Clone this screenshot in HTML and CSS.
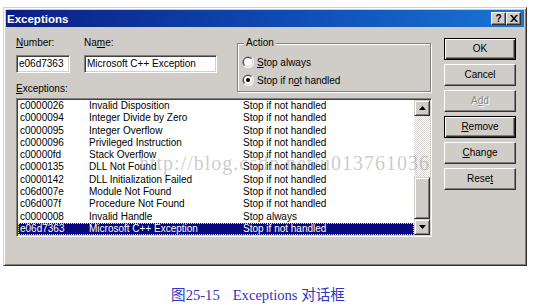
FILE: index.html
```html
<!DOCTYPE html>
<html>
<head>
<meta charset="utf-8">
<link rel="stylesheet" href="styles.css">
</head>
<body>
<div class="page">
  <div class="dialog">
    <div class="titlebar">
      <span class="title">Exceptions</span>
      <div class="tbtns">
        <div class="tbtn help">?</div>
        <div class="tbtn">
          <svg width="8" height="7" viewBox="0 0 8 7"><path d="M0 0h2l2 2.5L6 0h2L5 3.5 8 7H6L4 4.5 2 7H0l3-3.5z" fill="#000"/></svg>
        </div>
      </div>
    </div>
    <div class="body">
      <div class="left">
        <div class="top">
          <div class="fields">
            <div class="fieldrow">
              <div class="field num">
                <span class="lbl"><u>N</u>umber:</span>
                <div class="edit">e06d7363</div>
              </div>
              <div class="field name">
                <span class="lbl">Na<u>m</u>e:</span>
                <div class="edit">Microsoft C++ Exception</div>
              </div>
            </div>
            <span class="lbl exlabel"><u>E</u>xceptions:</span>
          </div>
          <fieldset class="group">
            <legend>Action</legend>
            <div class="radio">
              <svg width="12" height="12" viewBox="0 0 12 12"><circle cx="6" cy="6" r="6" fill="#fff"/><path d="M1.76 10.24A6 6 0 0 1 10.24 1.76z" fill="#808080"/><circle cx="6" cy="6" r="5" fill="#d4d0c8"/><path d="M2.46 9.54A5 5 0 0 1 9.54 2.46z" fill="#404040"/><circle cx="6" cy="6" r="4" fill="#fff"/></svg>
              <span><u>S</u>top always</span>
            </div>
            <div class="radio">
              <svg width="12" height="12" viewBox="0 0 12 12"><circle cx="6" cy="6" r="6" fill="#fff"/><path d="M1.76 10.24A6 6 0 0 1 10.24 1.76z" fill="#808080"/><circle cx="6" cy="6" r="5" fill="#d4d0c8"/><path d="M2.46 9.54A5 5 0 0 1 9.54 2.46z" fill="#404040"/><circle cx="6" cy="6" r="4" fill="#fff"/><circle cx="6" cy="6" r="2" fill="#000"/></svg>
              <span>Stop if n<u>o</u>t handled</span>
            </div>
          </fieldset>
        </div>
        <div class="list">
          <div class="rows">
            <div class="row"><span class="c1">c0000026</span><span class="c2">Invalid Disposition</span><span>Stop if not handled</span></div>
            <div class="row"><span class="c1">c0000094</span><span class="c2">Integer Divide by Zero</span><span>Stop if not handled</span></div>
            <div class="row"><span class="c1">c0000095</span><span class="c2">Integer Overflow</span><span>Stop if not handled</span></div>
            <div class="row"><span class="c1">c0000096</span><span class="c2">Privileged Instruction</span><span>Stop if not handled</span></div>
            <div class="row"><span class="c1">c00000fd</span><span class="c2">Stack Overflow</span><span>Stop if not handled</span></div>
            <div class="row"><span class="c1">c0000135</span><span class="c2">DLL Not Found</span><span>Stop if not handled</span></div>
            <div class="row"><span class="c1">c0000142</span><span class="c2">DLL Initialization Failed</span><span>Stop if not handled</span></div>
            <div class="row"><span class="c1">c06d007e</span><span class="c2">Module Not Found</span><span>Stop if not handled</span></div>
            <div class="row"><span class="c1">c06d007f</span><span class="c2">Procedure Not Found</span><span>Stop if not handled</span></div>
            <div class="row"><span class="c1">c0000008</span><span class="c2">Invalid Handle</span><span>Stop always</span></div>
            <div class="row sel"><span class="c1">e06d7363</span><span class="c2">Microsoft C++ Exception</span><span>Stop if not handled</span></div>
          </div>
          <div class="scrollbar">
            <div class="sbtn"><svg width="7" height="4" viewBox="0 0 7 4"><path d="M3.5 0L7 4H0z" fill="#000"/></svg></div>
            <div class="track"></div>
            <div class="thumb"></div>
            <div class="sbtn"><svg width="7" height="4" viewBox="0 0 7 4"><path d="M0 0h7L3.5 4z" fill="#000"/></svg></div>
          </div>
          <span class="watermark">http://blog.csdn.net/u013761036</span>
        </div>
      </div>
      <div class="buttons">
        <div class="btn dflt">OK</div>
        <div class="btn">Cancel</div>
        <div class="btn disabled">A<u>d</u>d</div>
        <div class="btn dflt"><u>R</u>emove</div>
        <div class="btn"><u>C</u>hange</div>
        <div class="btn">Rese<u>t</u></div>
      </div>
    </div>
  </div>
</div>
<div class="caption"><span>图25-15</span><span class="cap2">Exceptions 对话框</span></div>
</body>
</html>
```
FILE: styles.css
```css
html, body {
  margin: 0;
  padding: 0;
  background: #fff;
}
body {
  font-family: "Liberation Sans", Arial, sans-serif;
  font-size: 10px;
  color: #000;
}
.page {
  padding: 7px 0 0 3px;
}
.dialog {
  width: 524px;
  height: 259px;
  box-sizing: border-box;
  background: #d0cdc8;
  border: 1px solid;
  border-color: #d4d0c8 #303030 #303030 #d4d0c8;
  box-shadow: inset 1px 1px #fff, inset -1px -1px #808080;
  padding: 2px;
  display: flex;
  flex-direction: column;
}
.titlebar {
  height: 17px;
  flex: none;
  display: flex;
  align-items: center;
  justify-content: space-between;
  padding: 0 3px 0 1px;
  background: linear-gradient(90deg, #0a1e84 0%, #0f4cb4 55%, #1a74d6 100%);
  color: #fff;
}
.title {
  font-weight: bold;
  font-size: 11.5px;
  line-height: 14px;
}
.tbtns {
  display: flex;
}
.tbtn {
  width: 15px;
  height: 13px;
  box-sizing: border-box;
  background: #d0cdc8;
  border: 1px solid;
  border-color: #fff #303030 #303030 #fff;
  box-shadow: inset -1px -1px #808080;
  display: flex;
  align-items: center;
  justify-content: center;
  color: #000;
}
.help {
  font-weight: bold;
  font-size: 10px;
  line-height: 10px;
}
.body {
  display: flex;
  padding: 10px 0 0 10px;
}
.left {
  width: 416px;
}
.top {
  display: flex;
  height: 58px;
}
.fields {
  display: flex;
  flex-direction: column;
}
.fieldrow {
  display: flex;
  gap: 14px;
}
.field {
  display: flex;
  flex-direction: column;
  gap: 6px;
}
.lbl {
  line-height: 12px;
  display: block;
}
.edit {
  height: 18px;
  box-sizing: border-box;
  background: #fff;
  border: 1px solid;
  border-color: #808080 #fff #fff #808080;
  box-shadow: inset 1px 1px #404040, inset -1px -1px #d4d0c8;
  padding-left: 2px;
  line-height: 16px;
  white-space: nowrap;
  overflow: hidden;
}
.num .edit { width: 54px; }
.name .edit { width: 133px; }
.exlabel {
  margin-top: 10px;
}
.group {
  margin: 0 0 0 20px;
  padding: 4px 0 0 4px;
  width: 194px;
  height: 55px;
  box-sizing: border-box;
  border: 1px solid #808080;
  box-shadow: inset 1px 1px #fff, 1px 1px #fff;
  min-inline-size: 0;
}
.group legend {
  padding: 0 2px;
  margin-left: 2px;
  line-height: 12px;
  background: #d0cdc8;
}
.radio {
  display: flex;
  align-items: center;
  gap: 3px;
  height: 18px;
}
.radio svg {
  flex: none;
}
.list {
  position: relative;
  margin-top: 3px;
  height: 139px;
  box-sizing: border-box;
  border: 1px solid;
  border-color: #808080 #fff #fff #808080;
  box-shadow: inset 1px 1px #404040, inset -1px -1px #d4d0c8;
  padding: 1px;
  background: #fff;
  display: flex;
}
.rows {
  flex: 1;
  background: #fff;
}
.row {
  display: flex;
  height: 12.3px;
  line-height: 12.3px;
  padding-left: 2px;
  white-space: nowrap;
}
.c1 { width: 69px; flex: none; }
.c2 { width: 154px; flex: none; }
.row.sel {
  background: #0a0a80;
  color: #fff;
  outline: 1px dotted #e8e470;
  outline-offset: -1px;
}
.scrollbar {
  width: 16px;
  flex: none;
  display: flex;
  flex-direction: column;
}
.sbtn, .thumb {
  box-sizing: border-box;
  background: #d0cdc8;
  border: 1px solid;
  border-color: #d4d0c8 #303030 #303030 #d4d0c8;
  box-shadow: inset 1px 1px #fff, inset -1px -1px #808080;
}
.sbtn {
  height: 16px;
  display: flex;
  align-items: center;
  justify-content: center;
}
.track {
  flex: 1;
  background: repeating-conic-gradient(#fff 0 25%, #d8d6d2 0 50%) 0 0 / 2px 2px;
}
.thumb {
  height: 42px;
}
.watermark {
  position: absolute;
  left: 122px;
  top: 54px;
  font-family: "Liberation Serif", "Times New Roman", serif;
  font-size: 20px;
  line-height: 20px;
  letter-spacing: 1px;
  color: rgba(130, 130, 130, 0.42);
  white-space: nowrap;
  pointer-events: none;
}
.buttons {
  width: 72px;
  margin: 1px 0 0 12px;
  display: flex;
  flex-direction: column;
  gap: 4px;
}
.btn {
  height: 22px;
  box-sizing: border-box;
  border: 1px solid;
  border-color: #fff #303030 #303030 #fff;
  box-shadow: inset -1px -1px #808080;
  display: flex;
  align-items: center;
  justify-content: center;
  line-height: 12px;
}
.btn.dflt {
  border: 1px solid #000;
  box-shadow: inset 1px 1px #fff, inset -1px -1px #303030, inset -2px -2px #808080;
}
.btn.disabled {
  color: #8a8884;
  text-shadow: 1px 1px #fff;
}
.caption {
  margin-top: 20px;
  padding-right: 20px;
  text-align: center;
  font-family: "Liberation Serif", "Noto Sans CJK SC", serif;
  font-size: 14.6px;
  line-height: 18px;
  color: #2f36c0;
}
.cap2 {
  margin-left: 13px;
}
```
